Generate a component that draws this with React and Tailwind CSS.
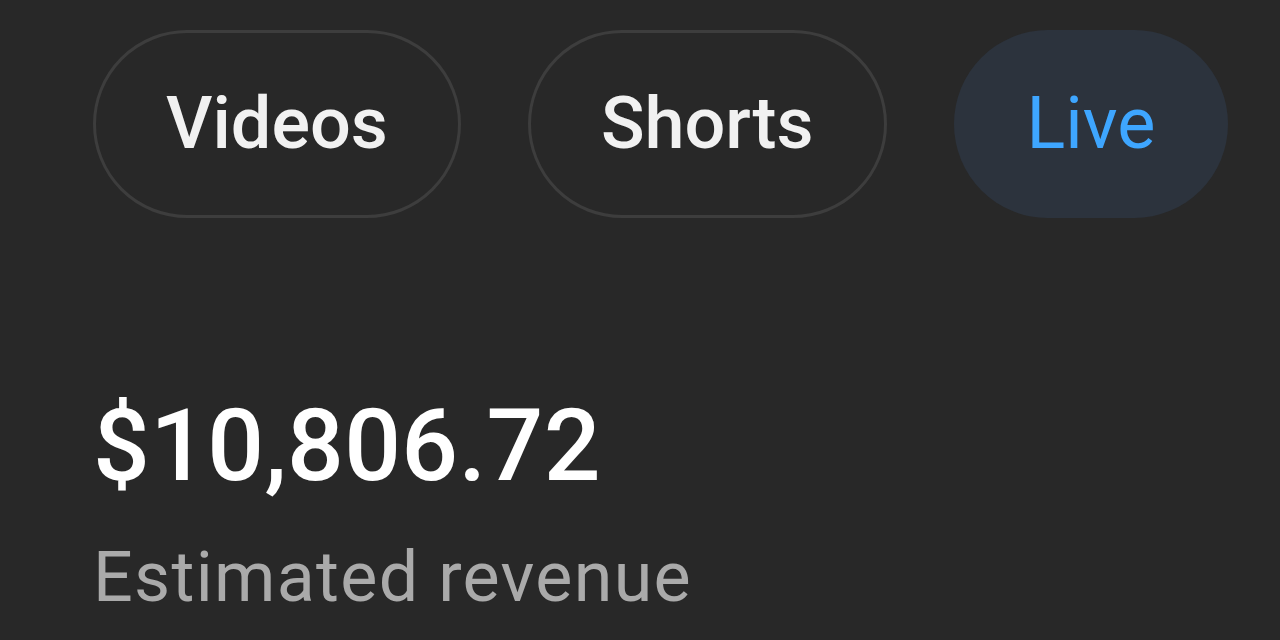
import React from "react";

const tabs = [
  { label: "Videos", active: false },
  { label: "Shorts", active: false },
  { label: "Live", active: true },
];

const App = () => {
  return (
    <div
      className="w-[1280px] h-[640px] overflow-hidden bg-[#282828] pl-[93px] pt-[30px]"
      style={{ fontFamily: "Roboto, 'Noto Sans', sans-serif" }}
    >
      <div className="flex gap-[67px]">
        {tabs.map((tab) =>
          tab.active ? (
            <div
              key={tab.label}
              className="h-[188px] px-[73px] rounded-full bg-[#2c333d] flex items-center text-[72px] text-[#3ea6ff]"
            >
              {tab.label}
            </div>
          ) : (
            <div
              key={tab.label}
              className="h-[188px] px-[70px] rounded-full border-[3px] border-[#3d3d3d] flex items-center text-[72px] font-medium text-[#f1f1f1]"
            >
              {tab.label}
            </div>
          )
        )}
      </div>

      <div className="mt-[168px] text-[100px] leading-[120px] font-medium tracking-[0.3px] text-white">
        $10,806.72
      </div>
      <div className="mt-[29px] text-[70px] leading-[84px] tracking-[1.3px] text-[#aaaaaa]">
        Estimated revenue
      </div>
    </div>
  );
};

export default App;
